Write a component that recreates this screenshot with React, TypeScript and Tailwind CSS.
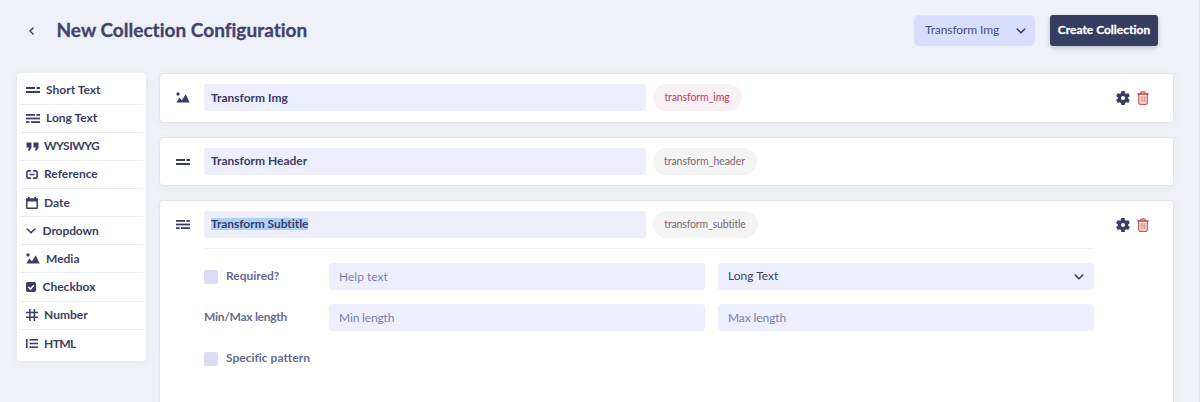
import type { ReactNode } from "react";

type IconProps = { className?: string };

function ShortTextIcon({ className = "" }: IconProps) {
  return (
    <svg viewBox="0 0 14 6" width="14" height="6" fill="currentColor" className={className}>
      <rect x="0" y="0" width="9" height="2" />
      <rect x="10.5" y="0" width="3.5" height="2" />
      <rect x="0" y="4" width="14" height="2" />
    </svg>
  );
}

function LongTextIcon({ className = "" }: IconProps) {
  return (
    <svg viewBox="0 0 14 9" width="14" height="9" fill="currentColor" className={className}>
      <rect x="0" y="0" width="9" height="1.8" />
      <rect x="10.5" y="0" width="3.5" height="1.8" />
      <rect x="0" y="3.6" width="14" height="1.8" />
      <rect x="0" y="7.2" width="3.5" height="1.8" />
      <rect x="5" y="7.2" width="9" height="1.8" />
    </svg>
  );
}

function QuoteIcon() {
  return (
    <svg viewBox="0 0 13 9" width="13" height="9" fill="currentColor">
      <path d="M.5 .5h5v5L3.900 8.500H1.700l1.300-3H.5zM7.500 .5h5v5l-1.600 3H8.700l1.300-3H7.500z" />
    </svg>
  );
}

function LinkIcon() {
  return (
    <svg viewBox="0 0 12 9" width="12" height="9" fill="none" stroke="currentColor" strokeWidth="1.6">
      <path d="M4.9 .9H2.6Q.9 .9.9 2.6V6.4Q.9 8.1 2.6 8.1H4.9M7.1 .9H9.4Q11.1 .9 11.1 2.6V6.4Q11.1 8.1 9.4 8.1H7.1M3.5 4.5H8.5" />
    </svg>
  );
}

function CalendarIcon() {
  return (
    <svg viewBox="0 0 12 12" width="12" height="12">
      <path
        fill="currentColor"
        fillRule="evenodd"
        d="M2 0H3.5V1.200H8.500V0H10V1.200H10.800Q12 1.200 12 2.400V10.800Q12 12 10.800 12H1.200Q0 12 0 10.800V2.400Q0 1.200 1.200 1.200H2ZM1.500 4.500V10.500H10.500V4.500Z"
      />
    </svg>
  );
}

function ChevronDown({ className = "" }: IconProps) {
  return (
    <svg
      viewBox="0 0 10 6"
      width="10"
      height="6"
      fill="none"
      stroke="currentColor"
      strokeWidth="1.6"
      strokeLinecap="round"
      strokeLinejoin="round"
      className={className}
    >
      <path d="M1.2 1 5 4.8 8.800 1" />
    </svg>
  );
}

function MediaIcon({ className = "" }: IconProps) {
  return (
    <svg viewBox="0 0 14 11" width="14" height="11" fill="currentColor" className={className}>
      <circle cx="2" cy="2" r="1.7" />
      <path d="M.4 10.500 3.500 5.600 5.900 8.300 9.700 2.200 13.600 10.500z" />
    </svg>
  );
}

function CheckboxIcon() {
  return (
    <svg viewBox="0 0 10 10" width="10" height="10">
      <rect width="10" height="10" rx="1.8" fill="currentColor" />
      <path d="M2.200 5 4.300 7.100 7.900 3.200" fill="none" stroke="#fff" strokeWidth="1.500" />
    </svg>
  );
}

function HashIcon() {
  return (
    <svg viewBox="0 0 12 12" width="12" height="12" fill="none" stroke="currentColor" strokeWidth="1.500">
      <path d="M3.900 0V12M8.400 0V12M0 3.600H12M0 8.300H12" />
    </svg>
  );
}

function HtmlIcon() {
  return (
    <svg viewBox="0 0 12 9" width="12" height="9" fill="currentColor">
      <rect width="1.600" height="9" />
      <rect x="3.500" y="0" width="8.500" height="1.600" />
      <rect x="3.500" y="3.700" width="8.500" height="1.600" />
      <rect x="3.500" y="7.400" width="8.500" height="1.600" />
    </svg>
  );
}

function GearIcon() {
  return (
    <svg viewBox="2 2 20 20" width="14" height="14" fill="currentColor">
      <path d="M19.430 12.980c.04-.32.070-.64.070-.98s-.03-.66-.07-.98l2.110-1.650c.19-.15.240-.42.120-.64l-2-3.460c-.12-.22-.39-.3-.61-.22l-2.490 1c-.52-.4-1.080-.73-1.690-.98l-.38-2.650C14.460 2.180 14.250 2 14 2h-4c-.25 0-.46.18-.49.420l-.38 2.650c-.61.250-1.170.590-1.690.980l-2.490-1c-.23-.09-.49 0-.61.220l-2 3.460c-.13.220-.07.490.120.640l2.110 1.650c-.04.320-.07.650-.07.980s.03.660.070.980l-2.110 1.650c-.19.150-.24.420-.12.640l2 3.460c.12.220.390.300.610.220l2.490-1c.52.400 1.080.730 1.690.980l.38 2.650c.03.240.240.420.490.420h4c.25 0 .46-.18.490-.42l.38-2.650c.61-.25 1.170-.59 1.690-.98l2.490 1c.23.090.490 0 .61-.22l2-3.460c.12-.22.070-.49-.12-.64zM12 15a3 3 0 1 1 0-6 3 3 0 0 1 0 6z" />
    </svg>
  );
}

function TrashIcon() {
  return (
    <svg viewBox="0 0 12 14" width="12" height="14" fill="none" stroke="#c9534f" strokeLinecap="round">
      <path d="M1.700 3.200V11.700Q1.700 13.300 3.300 13.300H8.700Q10.300 13.300 10.300 11.700V3.200z" fill="#fdeaea" strokeWidth="1.200" />
      <path d="M.6 2.900H11.400M3.600 2.700Q3.800 .8 5 .8H7Q8.200 .8 8.400 2.700" strokeWidth="1.200" />
      <path d="M4.200 5.500V11M6 5.500V11M7.800 5.500V11" strokeWidth=".7" />
    </svg>
  );
}

const fieldTypes: { label: string; icon: ReactNode; text: string }[] = [
  { label: "Short Text", icon: <ShortTextIcon />, text: "ml-[6.5px]" },
  { label: "Long Text", icon: <LongTextIcon />, text: "ml-[6.5px]" },
  { label: "WYSIWYG", icon: <QuoteIcon />, text: "ml-[5.5px] tracking-[-0.5px]" },
  { label: "Reference", icon: <LinkIcon />, text: "ml-[6.5px]" },
  { label: "Date", icon: <CalendarIcon />, text: "ml-[6.5px]" },
  { label: "Dropdown", icon: <ChevronDown />, text: "ml-[7px] tracking-[-0.1px]" },
  { label: "Media", icon: <MediaIcon />, text: "ml-[6.5px]" },
  { label: "Checkbox", icon: <CheckboxIcon />, text: "ml-[7px]" },
  { label: "Number", icon: <HashIcon />, text: "ml-[6.5px]" },
  { label: "HTML", icon: <HtmlIcon />, text: "ml-[6.5px] tracking-[-0.6px]" },
];

function FieldRow({
  icon,
  name,
  slug,
  pill,
  nameBox = "pb-px",
  actions = false,
  selected = false,
}: {
  icon: ReactNode;
  name: string;
  slug: string;
  pill: string;
  nameBox?: string;
  actions?: boolean;
  selected?: boolean;
}) {
  return (
    <div className="flex h-[27px] items-center">
      <div className="flex w-[44px] shrink-0 items-center pl-[16px]">{icon}</div>
      <div className={`flex h-[27px] w-[441.500px] items-center rounded-[3px] bg-[#edf0fc] pl-[7px] text-[12px] font-bold ${nameBox}`}>
        <span className={selected ? "bg-[#add0fb] leading-[12px] tracking-[-0.05px]" : "leading-[12px]"}>{name}</span>
      </div>
      <div className={`ml-[7px] flex h-[27px] items-center justify-center rounded-full text-[10.5px] ${pill}`}>{slug}</div>
      {actions && (
        <div className="mr-[24px] ml-auto flex items-center gap-[7px]">
          <GearIcon />
          <TrashIcon />
        </div>
      )}
    </div>
  );
}

const card = "border border-[#e3e4ed] bg-white shadow-[0_2px_10px_rgba(60,70,130,0.05)]";
const input = "flex h-[27px] items-center rounded-[4px] bg-[#edf0fc] px-[10px] text-[12px]";

export default function App() {
  return (
    <div className="flex h-[402px] w-[1200px] flex-col overflow-hidden border-r border-[#e4e5ee] bg-[#eff1f8] font-['Lato',sans-serif] text-[#3b3e64] [font-variant-ligatures:none]">
      <header className="flex h-[73px] shrink-0 items-start pt-[15px] pl-[28px]">
        <svg viewBox="0 0 7 10" width="7" height="10" fill="none" stroke="currentColor" strokeWidth="1.4" className="mt-[11px]">
          <path d="M5.500 1.500 2 5 5.500 8.500" />
        </svg>
        <h1 className="ml-[21.500px] text-[19px] leading-[29px] font-bold tracking-[0.020px] whitespace-nowrap text-[#42446f] [-webkit-text-stroke:0.3px_#42446f]">
          New Collection Configuration
        </h1>
        <div className="mr-[41px] ml-auto flex gap-[15px]">
          <button className="flex h-[31px] w-[121px] items-center justify-between rounded-[5px] bg-[#dadefe] pr-[9px] pl-[11px] text-[12px] text-[#4b4f7a]">
            <span className="pb-px tracking-[-0.1px]">Transform Img</span>
            <ChevronDown className="text-[#3b3e64]" />
          </button>
          <button className="h-[31px] w-[108px] rounded-[3px] bg-[#353d60] pb-px text-[12px] font-bold whitespace-nowrap text-white shadow-[0_2px_4px_rgba(53,61,96,0.25)] [-webkit-text-stroke:0.3px_white]">
            Create Collection
          </button>
        </div>
      </header>

      <div className="flex flex-1 items-start pl-[17px]">
        <aside className="h-[288px] w-[128.500px] shrink-0 rounded-[4px] bg-white px-[3px] pt-[3.500px] shadow-[0_1px_8px_rgba(60,70,130,0.07)]">
          {fieldTypes.map((t) => (
            <div
              key={t.label}
              className="flex h-[28.150px] items-center border-b border-[#eaedf8] pl-[5.500px] text-[12px] font-bold last:border-b-0"
            >
              {t.icon}
              <span className={t.text}>{t.label}</span>
            </div>
          ))}
        </aside>

        <main className="ml-[13.500px] flex w-[1015px] flex-col gap-[14px]">
          <section className={`h-[50px] rounded-[4px] pt-[10px] ${card}`}>
            <FieldRow icon={<MediaIcon />} name="Transform Img" slug="transform_img" pill="w-[89px] bg-[#f9f0f4] text-[#c23a62] tracking-[-0.1px]" nameBox="pt-px" actions />
          </section>
          <section className={`h-[49px] rounded-[4px] pt-[10px] ${card}`}>
            <FieldRow icon={<ShortTextIcon />} name="Transform Header" slug="transform_header" pill="w-[104px] bg-[#f4f4f5] text-[#80666f] tracking-[-0.05px]" />
          </section>
          <section className={`h-[230px] rounded-[4px] pt-[10px] ${card}`}>
            <FieldRow icon={<LongTextIcon />} name="Transform Subtitle" slug="transform_subtitle" pill="w-[105px] bg-[#f4f4f5] text-[#80666f] tracking-[-0.15px]" actions selected />
            <div className="mt-[10px] ml-[44px] w-[890px] border-t border-[#f1f2f7] pt-[14px] text-[12px] text-[#686c8d]">
              <div className="grid grid-cols-[125px_376px_376px] gap-y-[14px]">
                <div className="flex items-center gap-[8px] font-bold">
                  <span className="size-[14px] rounded-[2px] bg-[#d9dcf3]" />
                  <span className="pb-px">Required?</span>
                </div>
                <div className={`${input} text-[#7b80ab]`}>Help text</div>
                <div className={`${input} ml-[13px] w-[376px] justify-between text-[#3b3e64]`}>
                  <span className="pb-px">Long Text</span>
                  <ChevronDown />
                </div>
                <div className="flex items-center pb-px font-bold tracking-[-0.28px]">Min/Max length</div>
                <div className={`${input} tracking-[-0.15px] text-[#7b80ab]`}>Min length</div>
                <div className={`${input} ml-[13px] w-[376px] tracking-[-0.1px] text-[#7b80ab]`}>Max length</div>
                <div className="flex h-[27px] items-center gap-[8px] font-bold whitespace-nowrap">
                  <span className="size-[14px] rounded-[2px] bg-[#d9dcf3]" />
                  <span className="pb-px">Specific pattern</span>
                </div>
              </div>
            </div>
          </section>
        </main>
      </div>
    </div>
  );
}
